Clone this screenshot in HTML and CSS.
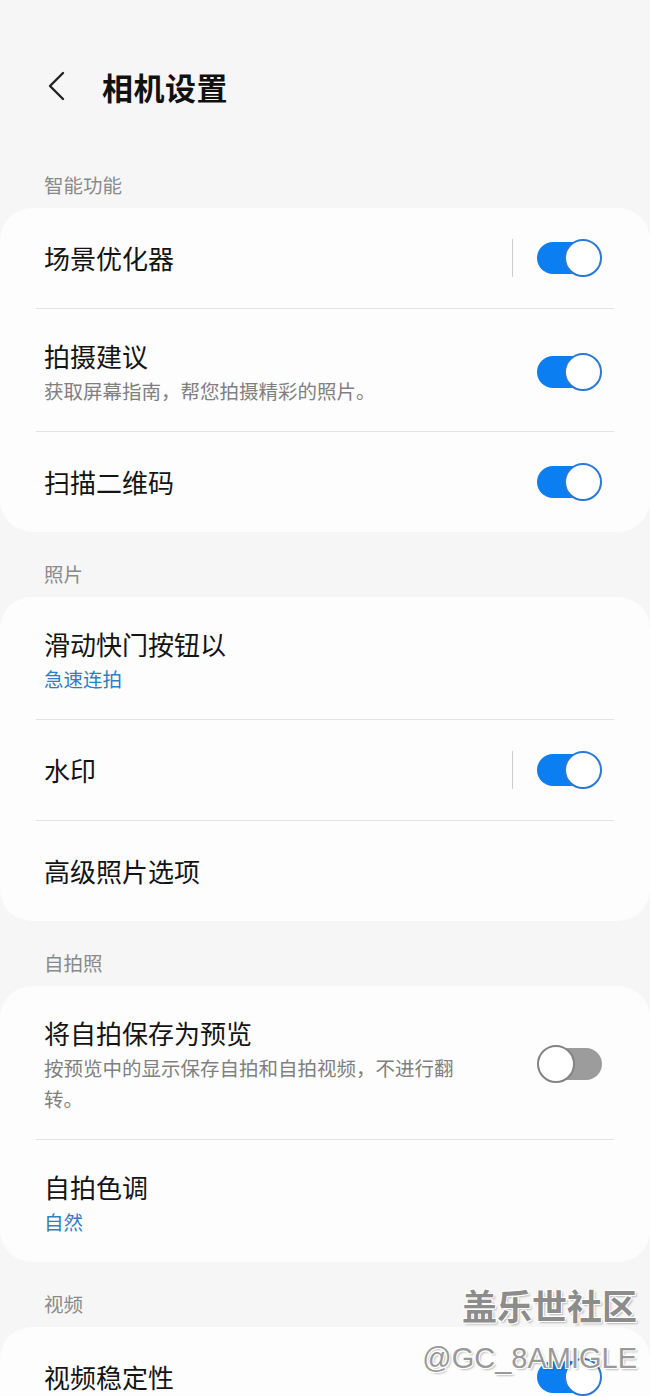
FILE: index.html
```html
<!DOCTYPE html>
<html lang="zh-CN">
<head>
    <meta charset="UTF-8">
    <meta name="viewport" content="width=device-width, initial-scale=1.0">
    <title>相机设置</title>
    <link rel="stylesheet" href="styles.css">
</head>
<body>
    <header class="top-bar">
        <svg class="back" width="18" height="30" viewBox="0 0 18 30">
            <polyline points="16,2 3,15 16,28" fill="none" stroke="#222" stroke-width="2.4" stroke-linecap="round" stroke-linejoin="round"/>
        </svg>
        <h1>相机设置</h1>
    </header>

    <h2 class="section-label">智能功能</h2>
    <section class="card">
        <div class="row">
            <div class="text"><p class="title">场景优化器</p></div>
            <span class="sep"></span>
            <span class="switch on"><span class="track"></span><span class="thumb"></span></span>
        </div>
        <div class="row has-sub">
            <div class="text">
                <p class="title">拍摄建议</p>
                <p class="sub">获取屏幕指南，帮您拍摄精彩的照片。</p>
            </div>
            <span class="switch on"><span class="track"></span><span class="thumb"></span></span>
        </div>
        <div class="row">
            <div class="text"><p class="title">扫描二维码</p></div>
            <span class="switch on"><span class="track"></span><span class="thumb"></span></span>
        </div>
    </section>

    <h2 class="section-label">照片</h2>
    <section class="card">
        <div class="row has-sub">
            <div class="text">
                <p class="title">滑动快门按钮以</p>
                <p class="sub value">急速连拍</p>
            </div>
        </div>
        <div class="row">
            <div class="text"><p class="title">水印</p></div>
            <span class="sep"></span>
            <span class="switch on"><span class="track"></span><span class="thumb"></span></span>
        </div>
        <div class="row">
            <div class="text"><p class="title">高级照片选项</p></div>
        </div>
    </section>

    <h2 class="section-label">自拍照</h2>
    <section class="card">
        <div class="row has-sub">
            <div class="text">
                <p class="title">将自拍保存为预览</p>
                <p class="sub">按预览中的显示保存自拍和自拍视频，不进行翻转。</p>
            </div>
            <span class="switch off"><span class="track"></span><span class="thumb"></span></span>
        </div>
        <div class="row has-sub">
            <div class="text">
                <p class="title">自拍色调</p>
                <p class="sub value">自然</p>
            </div>
        </div>
    </section>

    <h2 class="section-label">视频</h2>
    <section class="card">
        <div class="row">
            <div class="text"><p class="title">视频稳定性</p></div>
            <span class="switch on"><span class="track"></span><span class="thumb"></span></span>
        </div>
    </section>

    <div class="watermark">
        <span class="wm-name">盖乐世社区</span>
        <span class="wm-user">@GC_8AMIGLE</span>
    </div>
</body>
</html>
```

FILE: styles.css
```css
body {
    margin: 0;
    background-color: #f6f6f6;
    font-family: "Noto Sans CJK SC", "Noto Sans", sans-serif;
    color: #141414;
    overflow: hidden;
}
p, h1, h2 {
    margin: 0;
}
.top-bar {
    display: flex;
    align-items: center;
    height: 56px;
    padding: 58px 0 0 47px;
}
.top-bar h1 {
    margin-left: 37px;
    font-size: 31px;
    font-weight: 700;
    color: #111111;
    letter-spacing: 0.5px;
}
.section-label {
    margin: 59px 0 11px 44px;
    font-size: 19.5px;
    line-height: 24px;
    font-weight: 400;
    color: #8a8a8a;
}
.card + .section-label {
    margin-top: 30px;
}
.card {
    background-color: #fdfdfd;
    border-radius: 32px;
}
.row {
    display: flex;
    align-items: center;
    margin: 0 36px;
    padding: 31px 12px 31px 8px;
}
.row + .row {
    border-top: 1px solid #e3e3e3;
}
.row.has-sub {
    padding: 28px 12px 25px 8px;
}
.text {
    flex: 1;
}
.title {
    font-size: 26px;
    line-height: 38px;
}
.sub {
    font-size: 19.5px;
    line-height: 31px;
    color: #808080;
    padding-right: 60px;
}
.sub.value {
    color: #2f7fc2;
}
.sep {
    width: 1px;
    height: 38px;
    background-color: #cdcdcd;
    margin-right: 24px;
}
.switch {
    position: relative;
    width: 65px;
    height: 38px;
    flex-shrink: 0;
}
.switch .track {
    position: absolute;
    top: 3px;
    height: 32px;
    border-radius: 16px;
}
.switch .thumb {
    position: absolute;
    top: 0;
    width: 34px;
    height: 34px;
    border-radius: 50%;
    background-color: #ffffff;
    border: 2px solid #2b79d3;
}
.switch.on .track {
    left: 0;
    right: 4px;
    background-color: #0b7ff2;
}
.switch.on .thumb {
    right: 0;
}
.switch.off .track {
    left: 4px;
    right: 0;
    background-color: #9c9c9c;
}
.switch.off .thumb {
    left: 0;
    border-color: #838383;
}
.watermark {
    position: absolute;
    top: 1282px;
    right: 13px;
    display: flex;
    flex-direction: column;
    align-items: flex-end;
    color: #8c8c8c;
    text-shadow: 1px 1px 0 #ffffff, -1px -1px 0 #ffffff, 1px -1px 0 #ffffff, -1px 1px 0 #ffffff, 2px 2px 2px rgba(0, 0, 0, 0.25);
}
.wm-name {
    font-size: 35px;
    line-height: 46px;
    font-weight: 700;
}
.wm-user {
    font-family: "Liberation Sans", sans-serif;
    font-size: 29px;
    line-height: 36px;
    margin-top: 12px;
    color: #999999;
}
```
